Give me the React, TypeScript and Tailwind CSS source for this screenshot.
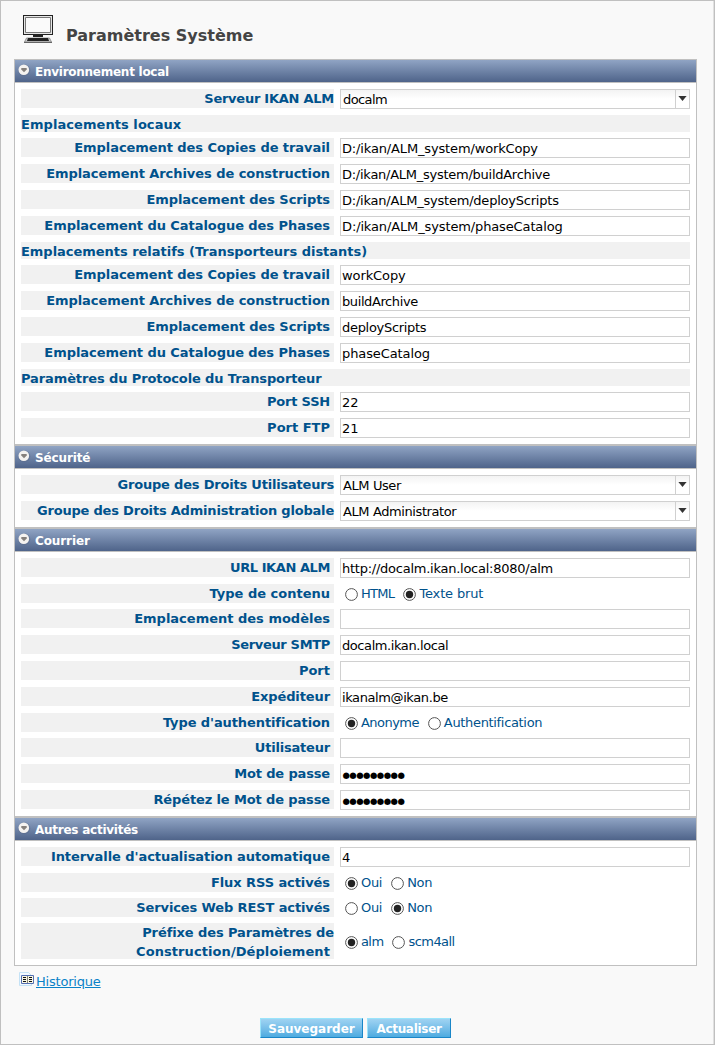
import type { ReactNode } from "react";

function Section({ title, tracking = "", children }: { title: string; tracking?: string; children: ReactNode }) {
  return (
    <section className="border border-[#c0c0c0] bg-white">
      <h2 className="flex h-[23px] items-center border-b border-[#c0c0c0] bg-linear-to-b from-[#90a4c4] to-[#4f648a] pl-[3px] text-[12px] font-bold text-white">
        <svg width="13" height="13" viewBox="0 0 13 13" className="mb-[2px] mr-[4px] shrink-0">
          <circle cx="6.3" cy="6.3" r="6" fill="#5b6a86" opacity="0.4" />
          <circle cx="5.8" cy="5.8" r="5.3" fill="#f4f2f0" />
          <path d="M3.3 4h5.4v1.4L6 8.3 3.3 5.4z" fill="#85807c" />
        </svg>
        <span className={`pt-[2px] ${tracking}`}>{title}</span>
      </h2>
      <div className="flex flex-col gap-[6px] p-[6px]">{children}</div>
    </section>
  );
}

type RowProps = { label: ReactNode; lt?: string; flush?: boolean; short?: boolean; children: ReactNode };

function Row({ label, lt = "", flush, short, children }: RowProps) {
  return (
    <div className={short ? "flex items-start gap-[6px]" : "flex h-[20px] items-start gap-[6px]"}>
      <div className={`w-[313px] shrink-0 bg-[#f1f1f1] text-right text-[13px] font-bold leading-[19px] text-[#00528c] whitespace-nowrap ${flush ? "" : "pr-[4px]"}`}>
        <span className={lt}>{label}</span>
      </div>
      {children}
    </div>
  );
}

function Field({ label, value = "", lt, vt = "" }: { label: string; value?: string; lt?: string; vt?: string }) {
  return (
    <Row label={label} lt={lt}>
      <div className={`h-[20px] flex-1 border border-[#d0d0d0] bg-white pl-px text-[13px] leading-[19px] text-black ${vt}`}>{value}</div>
    </Row>
  );
}

function Password({ label, lt }: { label: string; lt?: string }) {
  return (
    <Row label={label} lt={lt}>
      <div className="h-[20px] flex-1 border border-[#d0d0d0] bg-white pl-[1.5px] text-[8.5px] tracking-[-0.55px] leading-[20px] text-black">●●●●●●●●●</div>
    </Row>
  );
}

function Select({ label, value, lt, vt = "" }: { label: string; value: string; lt?: string; vt?: string }) {
  return (
    <Row label={label} lt={lt} flush>
      <div className="flex h-[20px] flex-1 border border-[#d0d0d0] bg-linear-to-b from-[#f3f3f3] to-white to-50% text-[13px] leading-[19px] text-black">
        <span className={`flex-1 pl-[2px] ${vt}`}>{value}</span>
        <span className="flex w-[14px] justify-center border-l border-[#d0d0d0] pt-[6px]">
          <svg width="9" height="6" viewBox="0 0 9 6"><path d="M0.4 0h8.2L4.5 5z" fill="#333" /></svg>
        </span>
      </div>
    </Row>
  );
}

function Radio({ text, on, gap = "", tracking = "" }: { text: string; on?: boolean; gap?: string; tracking?: string }) {
  return (
    <span className={`flex items-center ${gap}`}>
      <svg width="13" height="13" viewBox="0 0 13 13" className="mr-[3px] mt-[2px]">
        <circle cx="6.5" cy="6.5" r="5.9" fill="white" stroke="#555" />
        {on && <circle cx="6.5" cy="6.5" r="3.7" fill="#222" />}
      </svg>
      <span className={tracking}>{text}</span>
    </span>
  );
}

type RadioRowProps = {
  label: ReactNode;
  lt?: string;
  options: [string, string];
  ot?: [string, string];
  selected: number;
  flush?: boolean;
  tall?: boolean;
};

function RadioRow({ label, lt, options, ot = ["", ""], selected, flush, tall }: RadioRowProps) {
  return (
    <Row label={label} lt={lt} short flush={flush}>
      <div className={`flex pl-[5px] text-[13px] leading-[19px] text-[#00528c] ${tall ? "self-center" : ""}`}>
        <Radio text={options[0]} on={selected === 0} tracking={ot[0]} />
        <Radio text={options[1]} on={selected === 1} tracking={ot[1]} gap="ml-[9px]" />
      </div>
    </Row>
  );
}

function Heading({ children, tracking = "" }: { children: ReactNode; tracking?: string }) {
  return <h3 className={`h-[17px] bg-[#f1f1f1] text-[13px] font-bold leading-[19px] text-[#00528c] ${tracking}`}>{children}</h3>;
}

function Button({ children, className }: { children: ReactNode; className: string }) {
  return (
    <button className={`h-[20px] border border-t-[#9be4fb] border-l-[#9be4fb] border-b-[#1a86c8] border-r-[#1a86c8] bg-linear-to-b from-[#9fd3f2] to-[#4dabe0] pt-px text-center text-[12px] font-bold leading-[18px] text-white whitespace-nowrap ${className}`}>
      {children}
    </button>
  );
}

export default function App() {
  return (
    <main className="h-[1045px] w-[715px] border border-[#c0c0c0] bg-[#f9f9f9] pl-[13px] pr-[17px] font-['DejaVu_Sans',sans-serif] shadow-[inset_-1px_0_0_#e0e0e0]">
      <header className="flex h-[58px] pl-[9px] pt-[14px]">
        <svg width="30" height="28" viewBox="0 0 30 28" className="shrink-0">
          <path d="M0 0h30v20H0z" fill="#222" />
          <path d="M1 1h28v18H1z" fill="#e6e6e6" />
          <path d="M2.5 2.5h25v15h-25z" fill="#fafafa" stroke="#777" />
          <path d="M10 20h10v2H10z" fill="#222" />
          <path d="M3.5 23h23l2 4h-27z" fill="#ccc" stroke="#777" strokeWidth="0.7" />
          <path d="M5 23h20l1 3H4z" fill="#222" />
          <path d="M1 27.5h28" stroke="#666" />
        </svg>
        <h1 className="ml-[13px] mt-[9px] text-[16px] font-bold leading-[24px] text-[#444]">Paramètres Système</h1>
      </header>
      <Section title="Environnement local" tracking="tracking-[-0.26px]">
        <Select label="Serveur IKAN ALM" lt="tracking-[-0.25px]" value="docalm" vt="tracking-[-0.6px]" />
        <Heading tracking="tracking-[0.06px]">Emplacements locaux</Heading>
        <Field label="Emplacement des Copies de travail" lt="tracking-[-0.06px]" value="D:/ikan/ALM_system/workCopy" vt="tracking-[-0.15px]" />
        <Field label="Emplacement Archives de construction" lt="tracking-[-0.06px]" value="D:/ikan/ALM_system/buildArchive" vt="tracking-[-0.26px]" />
        <Field label="Emplacement des Scripts" lt="tracking-[-0.08px]" value="D:/ikan/ALM_system/deployScripts" vt="tracking-[-0.22px]" />
        <Field label="Emplacement du Catalogue des Phases" lt="tracking-[-0.06px]" value="D:/ikan/ALM_system/phaseCatalog" vt="tracking-[-0.13px]" />
        <Heading tracking="tracking-[-0.03px]">Emplacements relatifs (Transporteurs distants)</Heading>
        <Field label="Emplacement des Copies de travail" lt="tracking-[-0.06px]" value="workCopy" vt="tracking-[-0.1px]" />
        <Field label="Emplacement Archives de construction" lt="tracking-[-0.06px]" value="buildArchive" vt="tracking-[-0.4px]" />
        <Field label="Emplacement des Scripts" lt="tracking-[-0.08px]" value="deployScripts" vt="tracking-[-0.3px]" />
        <Field label="Emplacement du Catalogue des Phases" lt="tracking-[-0.06px]" value="phaseCatalog" vt="tracking-[-0.1px]" />
        <Heading tracking="tracking-[-0.11px]">Paramètres du Protocole du Transporteur</Heading>
        <Field label="Port SSH" lt="tracking-[-0.2px]" value="22" />
        <Field label="Port FTP" value="21" />
      </Section>
      <Section title="Sécurité" tracking="tracking-[-0.13px]">
        <Select label="Groupe des Droits Utilisateurs" lt="tracking-[-0.2px]" value="ALM User" vt="tracking-[-0.4px]" />
        <Select label="Groupe des Droits Administration globale" lt="tracking-[-0.2px]" value="ALM Administrator" vt="tracking-[-0.4px]" />
      </Section>
      <Section title="Courrier" tracking="tracking-[-0.1px]">
        <Field label="URL IKAN ALM" lt="tracking-[-0.42px]" value="http://docalm.ikan.local:8080/alm" vt="tracking-[-0.25px]" />
        <RadioRow label="Type de contenu" options={["HTML", "Texte brut"]} ot={["tracking-[-0.7px]", "tracking-[-0.15px]"]} selected={1} />
        <Field label="Emplacement des modèles" />
        <Field label="Serveur SMTP" lt="tracking-[-0.33px]" value="docalm.ikan.local" vt="tracking-[-0.42px]" />
        <Field label="Port" />
        <Field label="Expéditeur" lt="tracking-[-0.1px]" value="ikanalm@ikan.be" vt="tracking-[-0.4px]" />
        <RadioRow label="Type d'authentification" lt="tracking-[-0.1px]" options={["Anonyme", "Authentification"]} ot={["tracking-[-0.55px]", "tracking-[-0.33px]"]} selected={0} />
        <Field label="Utilisateur" lt="tracking-[-0.2px]" />
        <Password label="Mot de passe" lt="tracking-[-0.15px]" />
        <Password label="Répétez le Mot de passe" lt="tracking-[-0.13px]" />
      </Section>
      <Section title="Autres activités" tracking="tracking-[-0.25px]">
        <Field label="Intervalle d'actualisation automatique" lt="tracking-[-0.06px]" value="4" />
        <RadioRow label="Flux RSS activés" lt="tracking-[-0.08px]" options={["Oui", "Non"]} ot={["tracking-[-0.3px]", "tracking-[-0.3px]"]} selected={0} />
        <RadioRow label="Services Web REST activés" lt="tracking-[-0.12px]" options={["Oui", "Non"]} ot={["tracking-[-0.3px]", "tracking-[-0.3px]"]} selected={1} />
        <RadioRow
          label={
            <span className="block h-[36px]">
              <span className="tracking-[-0.1px]">Préfixe des Paramètres de</span>
              <br />
              <span className="pr-[4px] tracking-[0.08px]">Construction/Déploiement</span>
            </span>
          }
          options={["alm", "scm4all"]}
          ot={["tracking-[-0.6px]", "tracking-[-0.55px]"]}
          selected={0}
          flush
          tall
        />
      </Section>
      <a className="flex pl-[5px] pt-[6px] text-[13px] leading-[19px] text-[#0a82c8]">
        <svg width="15" height="14" viewBox="0 0 15 14" className="mr-[2px] block shrink-0">
          <path d="M0.5 0.5h9l3 3v10h-12z" fill="#f4faff" stroke="#c4e2f6" />
          <path d="M2.5 3.5h12v8h-12z" fill="#f8f6e4" stroke="#5470b4" />
          <path d="M8 4h1v7H8z" fill="#8a8a7a" />
          <path d="M4 5.5h3M4 7.5h3M4 9.5h3M10 5.5h3M10 7.5h3M10 9.5h3" stroke="#111" />
        </svg>
        <span className="underline tracking-[-0.2px]">Historique</span>
      </a>
      <footer className="flex gap-[4px] pl-[246px] pt-[27px]">
        <Button className="w-[103px]">Sauvegarder</Button>
        <Button className="w-[84px] tracking-[-0.3px]">Actualiser</Button>
      </footer>
    </main>
  );
}
